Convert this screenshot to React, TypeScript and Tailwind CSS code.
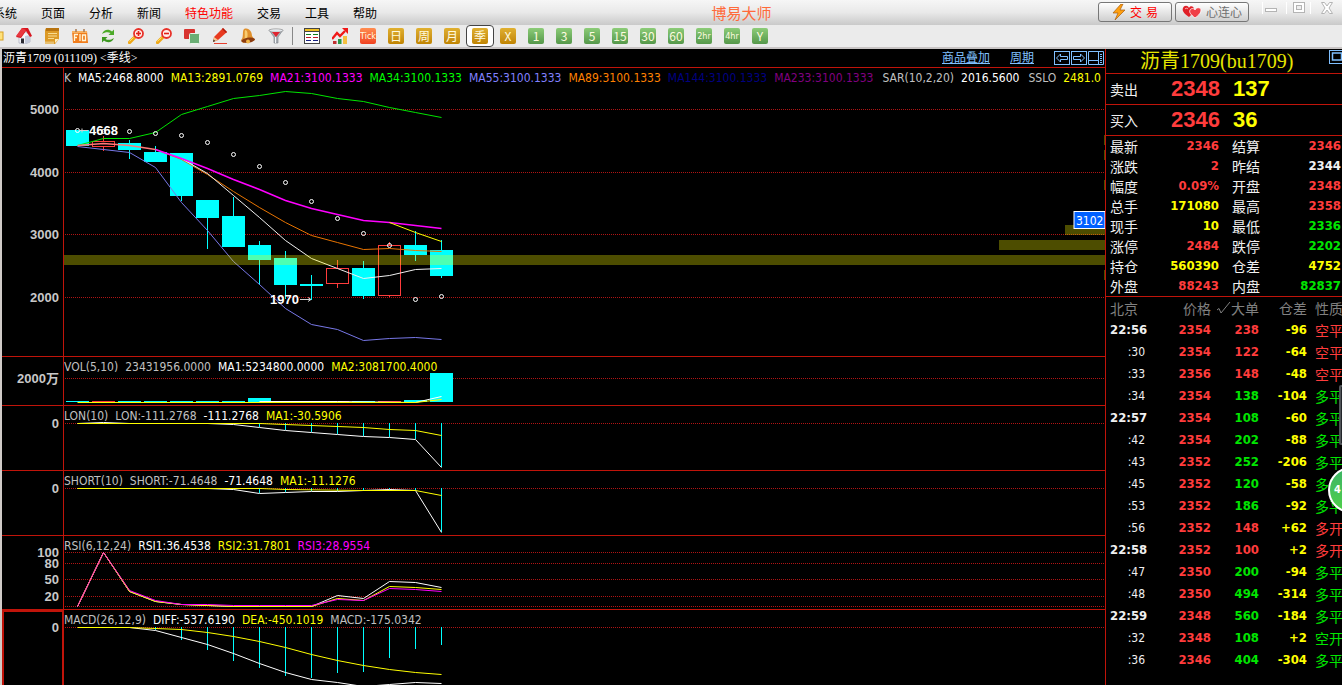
import React from "react";
import clsx from "clsx";

type Point = [index: number, y: number];

interface Candle {
  top: number;
  bottom: number;
  high?: number;
  low?: number;
  up?: boolean;
}

interface LegendItem {
  text: string;
  color: string;
}

interface AxisLabel {
  y: number;
  text: string;
}

const BAR_STEP = 26;
const barX = (index: number) => 13.5 + index * BAR_STEP;

const range = (ys: number[], start = 0): Point[] =>
  ys.map((y, i) => [start + i, y]);

const MENU = ["系统", "页面", "分析", "新闻", "特色功能", "交易", "工具", "帮助"];

const PERIODS = [
  { label: "Tick", tone: "tick" },
  { label: "日", tone: "gold" },
  { label: "周", tone: "gold" },
  { label: "月", tone: "gold" },
  { label: "季", tone: "gold", active: true },
  { label: "X", tone: "gold" },
  { label: "1", tone: "green" },
  { label: "3", tone: "green" },
  { label: "5", tone: "green" },
  { label: "15", tone: "green" },
  { label: "30", tone: "green" },
  { label: "60", tone: "green" },
  { label: "2hr", tone: "green" },
  { label: "4hr", tone: "green" },
  { label: "Y", tone: "green" },
];

const CANDLES: Candle[] = [
  { top: 62, bottom: 78 },
  { top: 73, bottom: 79, high: 68, low: 83, up: true },
  { top: 75, bottom: 82, high: 72, low: 91 },
  { top: 84, bottom: 94, high: 78 },
  { top: 85, bottom: 128, low: 133 },
  { top: 132, bottom: 150, low: 181 },
  { top: 148, bottom: 179, high: 129 },
  { top: 177, bottom: 192, high: 173, low: 217 },
  { top: 190, bottom: 217, high: 183, low: 231 },
  { top: 216, bottom: 218, high: 207, low: 232 },
  { top: 200, bottom: 216, high: 192, low: 220, up: true },
  { top: 200, bottom: 228, high: 193, low: 231 },
  { top: 177, bottom: 228, high: 174, low: 229, up: true },
  { top: 177, bottom: 187, high: 163, low: 193 },
  { top: 182, bottom: 208, high: 172, low: 210 },
];

const SAR = [63, 64, 64, 66, 68, 75, 87, 99, 115, 134, 151, 166, 178, 232, 229];

const UPPER = range([77, 70, 70, 64, 46, 38, 30, 27, 23, 25, 30, 33, 39, 44, 49]);
const LOWER = range([
  78, 81, 84, 99, 134, 162, 193, 216, 240, 256, 261, 272, 270, 269, 271,
]);
const MA5 = range([90, 105, 127, 149, 172, 190, 200, 210, 207, 201, 200], 4);
const MIDDLE = range(
  [81, 91, 106, 123, 139, 154, 167, 174, 181, 180, 182, 183],
  3
);
const MA21 = range(
  [81, 90, 100, 111, 121, 132, 140, 146, 152, 154, 157, 160],
  3
);

const LON_DIFF = [17, 16, 17, 17, 17, 17, 18, 21, 24, 26, 28, 30, 31, 33, 61];
const SHORT_DIFF = [
  17, 17, 17, 17, 17, 17, 18, 22, 21, 20, 20, 19, 18, 19, 61,
];
const MACD_BARS = [20, 30, 40, 51, 58, 66, 68, 63, 62, 48, 39, 35];

const QUOTES = [
  ["最新", "2346", "text-[#ff3c3c]", "结算", "2346", "text-[#ff3c3c]"],
  ["涨跌", "2", "text-[#ff3c3c]", "昨结", "2344", "text-[#f0f0f0]"],
  ["幅度", "0.09%", "text-[#ff3c3c]", "开盘", "2348", "text-[#ff3c3c]"],
  ["总手", "171080", "text-[#ffff00]", "最高", "2358", "text-[#ff3c3c]"],
  ["现手", "10", "text-[#ffff00]", "最低", "2336", "text-[#00e600]"],
  ["涨停", "2484", "text-[#ff3c3c]", "跌停", "2202", "text-[#00e600]"],
  ["持仓", "560390", "text-[#ffff00]", "仓差", "4752", "text-[#ffff00]"],
  ["外盘", "88243", "text-[#ff3c3c]", "内盘", "82837", "text-[#00e600]"],
];

const TICKS = [
  { time: "22:56", price: "2354", lots: "238", diff: "-96", kind: "空平", up: true },
  { time: ":30", price: "2354", lots: "122", diff: "-64", kind: "空平", up: true },
  { time: ":33", price: "2356", lots: "148", diff: "-48", kind: "空平", up: true },
  { time: ":34", price: "2354", lots: "138", diff: "-104", kind: "多平", up: false },
  { time: "22:57", price: "2354", lots: "108", diff: "-60", kind: "多平", up: false },
  { time: ":42", price: "2354", lots: "202", diff: "-88", kind: "多平", up: false },
  { time: ":43", price: "2352", lots: "252", diff: "-206", kind: "多平", up: false },
  { time: ":45", price: "2352", lots: "120", diff: "-58", kind: "多平", up: false },
  { time: ":53", price: "2352", lots: "186", diff: "-92", kind: "多平", up: false },
  { time: ":56", price: "2352", lots: "148", diff: "+62", kind: "多开", up: true },
  { time: "22:58", price: "2352", lots: "100", diff: "+2", kind: "多开", up: true },
  { time: ":47", price: "2350", lots: "200", diff: "-94", kind: "多平", up: false },
  { time: ":48", price: "2350", lots: "494", diff: "-314", kind: "多平", up: false },
  { time: "22:59", price: "2348", lots: "560", diff: "-184", kind: "多平", up: false },
  { time: ":32", price: "2348", lots: "108", diff: "+2", kind: "空开", up: false },
  { time: ":36", price: "2346", lots: "404", diff: "-304", kind: "多平", up: false },
];

/* ---------- Toolbar icons ---------- */

const HomeIcon = () => (
  <svg width="16" height="16" viewBox="0 0 16 16">
    <path d="M3 8v7l6 1 5-2V7L8 3z" fill="#f4f4f8" stroke="#9aa0b4" strokeWidth=".6" />
    <path d="M9 16l5-2V7L9 8z" fill="#c4cada" />
    <path d="M6 0h6l4 8-2 1-4-6-5 7-5-1z" fill="#d8141e" />
    <path d="M6 0L0 8l5 1 5-7z" fill="#e83840" />
    <path d="M5 10.500h3v5l-3-.6z" fill="#2c2c34" />
  </svg>
);

const NoteIcon = () => (
  <svg width="16" height="16" viewBox="0 0 16 16">
    <path d="M2 0h13v11l-4 5H1V2z" fill="#dc9a26" />
    <path d="M2 0h13v3H2z" fill="#b87410" />
    <path d="M4 5.500h9M4 8h9M4 10.500h6" stroke="#f8dc90" />
    <path d="M15 11l-4 4v-4z" fill="#fff0c0" />
    <path d="M1 13.500h9V16H1z" fill="#e8c070" />
  </svg>
);

const F10Icon = () => (
  <svg width="16" height="16" viewBox="0 0 16 16">
    <path d="M0 3h15l1 12H1z" fill="#f07c1c" />
    <path d="M0 3h15v2H0z" fill="#f8b060" />
    <path d="M4 1v3M12 1v3" stroke="#a87850" strokeWidth="1.500" />
    <path d="M2.500 13V6.500H6M2.500 9.500H5M8 6v7M10.500 7h3v5.500h-3z" fill="none" stroke="#fff6d8" strokeWidth="1.300" />
  </svg>
);

const RefreshIcon = () => (
  <svg width="16" height="16" viewBox="0 0 16 16">
    <path d="M2 6c2-5 7-5 10-2.500l2-2V7H8.500l2-2C8 3.500 5 4 2 6z" fill="#4caa28" />
    <path d="M14 10c-2 5-7 5-10 2.500l-2 2V9h5.500l-2 2c2.500 1.500 5.500 1 8.500-1z" fill="#3c9820" />
  </svg>
);

const MagnifierIcon = ({ plus }: { plus?: boolean }) => (
  <svg width="16" height="16" viewBox="0 0 16 16">
    <path d="M1.500 14.500l5-5" stroke="#f0a818" strokeWidth="3.200" strokeLinecap="round" />
    <path d="M1.500 13.500l4-4" stroke="#ffe060" strokeWidth="1" />
    <circle cx="10.500" cy="5.500" r="4.500" fill="#fff0ec" stroke="#e83028" strokeWidth="1.800" />
    <path d="M8 5.500h5" stroke="#e02018" strokeWidth="1.600" />
    {plus && <path d="M10.500 3v5" stroke="#e02018" strokeWidth="1.600" />}
  </svg>
);

const OverlayIcon = () => (
  <svg width="16" height="16" viewBox="0 0 16 16">
    <rect x="0" y="1" width="11" height="10" rx="1" fill="#d83430" />
    <rect x="5.500" y="5.500" width="10" height="10" rx="1" fill="#6aae74" stroke="#e8f4e8" />
  </svg>
);

const PencilIcon = () => (
  <svg width="16" height="16" viewBox="0 0 16 16">
    <path d="M1 14l1-5 9-9 4 4-9 8z" fill="#e83a20" />
    <path d="M10 1l4 4 1-1-4-4z" fill="#b01c10" />
    <path d="M1 14l1-5 4 3z" fill="#f4c890" />
    <path d="M1 14l.5-2.500L3.500 13z" fill="#403028" />
    <path d="M2 15.500h13" stroke="#e84030" />
  </svg>
);

const BellIcon = () => (
  <svg width="16" height="16" viewBox="0 0 16 16">
    <path d="M4 1c5-2 8 3 8 7l3 4-12 3-2-3c3-2 1-9 3-11z" fill="#e0902c" />
    <path d="M5 2c3 0 3 5 2 10l-4 2c3-4 1-8 2-12z" fill="#f8cc70" />
    <path d="M1 13c3-3 9-5 14-2 0 3-10 6-14 2z" fill="#8c3c10" />
    <circle cx="8" cy="13.500" r="2" fill="#f4b848" />
  </svg>
);

const FunnelIcon = () => (
  <svg width="16" height="16" viewBox="0 0 16 16">
    <path d="M1 2h14l-5 7v6H6V9z" fill="#a8aeb4" stroke="#787e84" strokeWidth=".6" />
    <ellipse cx="8" cy="2.500" rx="7" ry="1.700" fill="#e4e8ec" stroke="#888" strokeWidth=".6" />
    <path d="M4 4h8L8 9z" fill="#e02430" />
    <path d="M7.500 9v6" stroke="#f4f6f8" />
  </svg>
);

const TableIcon = () => (
  <svg width="16" height="16" viewBox="0 0 16 16">
    <rect x=".5" y=".5" width="15" height="15" fill="#fff" stroke="#444" />
    <path d="M1 2h14" stroke="#f0c020" strokeWidth="2" />
    <path d="M1 3.500h14" stroke="#444" />
    <path d="M2 6.500h5M9 6.500h5" stroke="#108018" />
    <path d="M2 9.500h5M9 9.500h5" stroke="#c01828" />
    <path d="M2 12.500h5M9 12.500h5" stroke="#182080" />
  </svg>
);

const TrendIcon = () => (
  <svg width="16" height="16" viewBox="0 0 16 16">
    <rect x="1" y="13" width="3.500" height="3" fill="#c03030" />
    <rect x="6" y="11" width="3.500" height="5" fill="#289848" />
    <rect x="11" y="8" width="4" height="8" fill="#f4c040" />
    <path d="M0 11l5-6 3 3 5-5" fill="none" stroke="#f01818" strokeWidth="2.400" />
    <path d="M10 0h6v6z" fill="#f01818" />
  </svg>
);

const FolderIcon = () => (
  <svg width="16" height="16" viewBox="0 0 16 16">
    <rect x="1" y="4" width="14" height="8" fill="#ffe27a" stroke="#d8a020" />
  </svg>
);

const TOOLS = [
  { label: "打开", icon: <FolderIcon /> },
  { label: "首页", icon: <HomeIcon /> },
  { label: "公告", icon: <NoteIcon /> },
  { label: "F10", icon: <F10Icon /> },
  { label: "刷新", icon: <RefreshIcon /> },
  { label: "放大", icon: <MagnifierIcon plus /> },
  { label: "缩小", icon: <MagnifierIcon /> },
  { label: "叠加", icon: <OverlayIcon /> },
  { label: "画线", icon: <PencilIcon /> },
  { label: "预警", icon: <BellIcon /> },
  { label: "筛选", icon: <FunnelIcon /> },
];

/* ---------- Header ---------- */

const TitleBar = () => (
  <header className="flex h-[25px] shrink-0 items-center bg-linear-to-b from-[#f6f6f6] via-[#e9e9e9] to-[#c9c9c9]">
    <nav className="-ml-[7px] flex gap-6 text-xs text-black">
      {MENU.map((item) => (
        <button
          key={item}
          type="button"
          className={clsx("whitespace-nowrap", item === "特色功能" && "text-[#ff0000]")}
        >
          {item}
        </button>
      ))}
    </nav>
    <h1 className="flex-1 pl-2 text-center text-[15px] leading-5 text-[#ff6a3a]">
      博易大师
    </h1>
    <div className="flex gap-[3px] self-start pt-[2px]">
      <button
        type="button"
        className="flex h-5 w-[74px] items-center justify-center gap-1 rounded-[3px] border border-[#777] bg-linear-to-b from-white to-[#cfcfcf] text-xs text-[#ff0000]"
      >
        <svg width="14" height="16" viewBox="0 0 14 16">
          <path d="M9 0L1 9h5l-3 7 10-10H8l3-6z" fill="#ffa010" stroke="#a85c10" strokeWidth=".7" />
        </svg>
        <span className="flex gap-1">
          <span>交</span>
          <span>易</span>
        </span>
      </button>
      <button
        type="button"
        className="flex h-5 w-[74px] items-center justify-center gap-1 rounded-[3px] border border-[#777] bg-linear-to-b from-white to-[#cfcfcf] text-xs text-[#707070]"
      >
        <svg width="20" height="14" viewBox="0 0 20 14">
          <path d="M7 12C1 8 0 5 1 3c1-3 5-3 6 0 1-3 5-2 5 1 0 3-2 5-5 8z" fill="#e02028" />
          <path d="M13 13C8 9 7 7 8 5c1-2 4-2 5 0 1-3 6-3 6 0s-2 5-6 8z" fill="#f04048" stroke="#fff" strokeWidth=".8" />
          <path d="M3 4c1-1 2-1 3 0" stroke="#ffc0c0" fill="none" />
        </svg>
        心连心
      </button>
    </div>
    <div className="ml-[13px] flex items-start self-start pt-[2px] text-[#b4b4b4]">
      <button type="button" aria-label="最小化" className="flex w-6 justify-center border-l border-white pr-2">
        <svg width="12" height="12" viewBox="0 0 12 12">
          <rect x=".5" y="6.500" width="11" height="3" fill="#fff" stroke="currentColor" />
        </svg>
      </button>
      <button type="button" aria-label="还原" className="flex w-6 justify-center border-l border-white">
        <svg width="12" height="12" viewBox="0 0 12 12">
          <rect x=".5" y=".5" width="11" height="10" fill="#fff" stroke="currentColor" />
          <rect x="3.500" y="3.500" width="5" height="4" fill="#eee" stroke="currentColor" />
        </svg>
      </button>
      <button type="button" aria-label="关闭" className="flex w-8 justify-center border-l border-white">
        <svg width="12" height="12" viewBox="0 0 12 12">
          <path d="M.5.5h3L6 4 8.500.5h3L8 6l3.500 5.500h-3L6 8l-2.500 3.500h-3L4 6z" fill="#fff" stroke="currentColor" />
        </svg>
      </button>
    </div>
  </header>
);

const PeriodButton = ({
  label,
  tone,
  active,
}: {
  label: string;
  tone: string;
  active?: boolean;
}) => (
  <button
    type="button"
    className={clsx(
      "flex h-[22px] w-7 items-center justify-center",
      active && "rounded-[4px] border border-[#444] bg-white"
    )}
  >
    <span
      className={clsx(
        "flex size-4 items-center justify-center rounded-[2px] leading-4 text-[#fffbe0]",
        tone === "tick" && "bg-linear-to-b from-[#ff8c50] to-[#f04020]",
        tone === "gold" && "bg-linear-to-b from-[#e0b030] to-[#c08400]",
        tone === "green" && "bg-linear-to-b from-[#8ccc78] to-[#55984a]",
        label.length > 2
          ? "font-['DejaVu_Sans_Condensed',sans-serif] text-[9px]"
          : "text-xs"
      )}
    >
      {label}
    </span>
  </button>
);

const Toolbar = () => (
  <div className="flex h-6 shrink-0 border-b-2 border-[#c8c4c4] bg-[#ebebeb]">
    <div className="-ml-[18px] flex">
      {TOOLS.map(({ label, icon }) => (
        <button
          key={label}
          type="button"
          aria-label={label}
          className="flex h-[22px] w-7 items-center justify-center"
        >
          {icon}
        </button>
      ))}
    </div>
    <div className="my-[2px] mr-[5px] ml-[2px] w-px bg-[#888]" />
    <button type="button" aria-label="报价" className="flex h-[22px] w-7 items-center justify-center">
      <TableIcon />
    </button>
    <button type="button" aria-label="走势" className="flex h-[22px] w-7 items-center justify-center">
      <TrendIcon />
    </button>
    {PERIODS.map((period) => (
      <PeriodButton key={period.label} {...period} />
    ))}
  </div>
);

/* ---------- Charts ---------- */

const Line = ({
  points,
  color,
  width = 1,
}: {
  points: Point[];
  color: string;
  width?: number;
}) => (
  <polyline
    points={points.map(([i, y]) => `${barX(i)},${y + 0.5}`).join(" ")}
    fill="none"
    stroke={color}
    strokeWidth={width}
  />
);

const GridLine = ({ y }: { y: number }) => (
  <line
    x1="1"
    x2="100%"
    y1={y + 0.5}
    y2={y + 0.5}
    stroke="#b01414"
    strokeDasharray="1 1"
  />
);

const Sticks = ({ base, points }: { base: number; points: Point[] }) => (
  <>
    {points.map(([i, y]) => (
      <line key={i} x1={barX(i)} x2={barX(i)} y1={base} y2={y} stroke="#00ffff" />
    ))}
  </>
);

interface PanelProps {
  className: string;
  legend: LegendItem[];
  labels: AxisLabel[];
  grid: number[];
  selected?: boolean;
  children: React.ReactNode;
}

const Panel: React.FC<PanelProps> = ({
  className,
  legend,
  labels,
  grid,
  selected,
  children,
}) => (
  <section className={clsx("flex border-[#c0140a]", className)}>
    <div
      className={clsx(
        "w-[62px] shrink-0 border-[#c0140a]",
        selected ? "border-2 border-b-0" : "border-r"
      )}
    >
      <svg className="block h-full w-full overflow-visible">
        {labels.map(({ y, text }) => (
          <text
            key={text}
            x={selected ? 55 : 57}
            y={selected ? y + 3 : y + 5}
            textAnchor="end"
            className="fill-[#c8c8c8] font-['Liberation_Sans','Noto_Sans_CJK_SC',sans-serif] text-[13px] font-bold"
          >
            {text}
          </text>
        ))}
      </svg>
    </div>
    <div className="relative min-w-0 flex-1 overflow-hidden">
      <div className="flex h-5 items-center gap-[7px] font-['DejaVu_Sans_Condensed','DejaVu_Sans',sans-serif] text-xs whitespace-nowrap">
        {legend.map(({ text, color }) => (
          <span key={text} className={color}>
            {text}
          </span>
        ))}
      </div>
      <svg className="absolute inset-0 h-full w-full">
        {grid.map((y) => (
          <GridLine key={y} y={y} />
        ))}
        {children}
      </svg>
    </div>
  </section>
);

const CandleShape = ({ candle, index }: { candle: Candle; index: number }) => {
  const x = barX(index);
  const color = candle.up ? "#ff3c3c" : "#00ffff";
  return (
    <g stroke={color}>
      {candle.high !== undefined && (
        <line x1={x} x2={x} y1={candle.high} y2={candle.top} />
      )}
      {candle.low !== undefined && (
        <line x1={x} x2={x} y1={candle.bottom} y2={candle.low} />
      )}
      <rect
        x={x - 11}
        y={candle.top + 0.5}
        width="22"
        height={candle.bottom - candle.top - 1}
        fill={candle.up ? "none" : color}
      />
    </g>
  );
};

const PricePanel = () => (
  <Panel
    className="h-[289px] border-b"
    grid={[41, 104, 166, 229]}
    labels={[
      { y: 41, text: "5000" },
      { y: 104, text: "4000" },
      { y: 166, text: "3000" },
      { y: 229, text: "2000" },
    ]}
    legend={[
      { text: "K", color: "text-[#c0c0c0]" },
      { text: "MA5:2468.8000", color: "text-white" },
      { text: "MA13:2891.0769", color: "text-[#ffff00]" },
      { text: "MA21:3100.1333", color: "text-[#ff00ff]" },
      { text: "MA34:3100.1333", color: "text-[#00ff00]" },
      { text: "MA55:3100.1333", color: "text-[#8080ff]" },
      { text: "MA89:3100.1333", color: "text-[#ff8000]" },
      { text: "MA144:3100.1333", color: "text-[#000080]" },
      { text: "MA233:3100.1333", color: "text-[#800080]" },
      { text: "SAR(10,2,20)", color: "text-[#c0c0c0] pl-[2px]" },
      { text: "2016.5600", color: "text-white" },
      { text: "SSLO", color: "text-[#c0c0c0] pl-[2px]" },
      { text: "2481.0", color: "text-[#ffff00]" },
    ]}
  >
    {CANDLES.map((candle, i) => (
      <CandleShape key={i} candle={candle} index={i} />
    ))}
    <Line points={LOWER} color="#7878e8" />
    <Line points={UPPER} color="#00e600" />
    <Line points={MIDDLE} color="#e87400" />
    <Line points={MA5} color="#f0f0f0" />
    <Line points={MA21} color="#ff00ff" width={1.5} />
    <Line points={range([77, 75, 77, 81])} color="#ff7878" width={1.5} />
    <Line points={range([154, 164, 173], 12)} color="#ffff00" />
    {/* Volume by price, grows from the right edge */}
    <rect x="0" y="187" width="100%" height="10" fill="#ffff00" opacity=".3" />
    <svg x="100%" overflow="visible" fill="#ffff00" fillOpacity=".3">
      <rect x="-40" y="157" width="40" height="10" />
      <rect x="-106" y="172" width="106" height="10" />
      <rect x="-1" y="67" width="1" height="10" />
      <rect x="-1" y="82" width="1" height="10" />
      <rect x="-1" y="112" width="1" height="10" />
      <rect x="-1" y="202" width="1" height="10" />
    </svg>
    {SAR.map((y, i) => (
      <circle key={i} cx={barX(i)} cy={y - 0.5} r="2" fill="none" stroke="#fff" />
    ))}
    <g className="fill-white font-['Liberation_Sans',sans-serif] text-[13px] font-bold">
      <text x="25" y="67">4668</text>
      <text x="206" y="236">1970</text>
    </g>
    <path d="M15 62.500h9M18 60.500v4M236 231.500h11M244 229.500l3 2-3 2" fill="none" stroke="#d0d0d0" />
    <svg x="100%" overflow="visible">
      <rect x="-31" y="143.500" width="31" height="17" fill="#0060ff" stroke="#fff" />
      <text
        x="-29"
        y="157"
        className="fill-white font-['DejaVu_Sans_Condensed','DejaVu_Sans',sans-serif] text-xs"
      >
        3102
      </text>
    </svg>
  </Panel>
);

const VolumePanel = () => (
  <Panel
    className="h-[49px] border-b"
    grid={[21]}
    labels={[{ y: 21, text: "2000万" }]}
    legend={[
      { text: "VOL(5,10)", color: "text-[#c0c0c0]" },
      { text: "23431956.0000", color: "text-[#c0c0c0]" },
      { text: "MA1:5234800.0000", color: "text-white" },
      { text: "MA2:3081700.4000", color: "text-[#ffff00]" },
    ]}
  >
    {[44, 44, 44, 44, 44, 44, 44, 41, 44, 44, 44, 44, 44, 43, 16].map((y, i) => (
      <rect
        key={i}
        x={barX(i) - 11.5}
        y={y}
        width="23"
        height={45 - y}
        fill={CANDLES[i].up ? "#ff3c3c" : "#00ffff"}
      />
    ))}
    <Line points={[[7, 44], [10, 44], [13, 45], [14, 39]]} color="#ffffff" />
    <Line points={[[0, 45], [13, 45], [14, 42]]} color="#ffff00" />
  </Panel>
);

const LonPanel = () => (
  <Panel
    className="h-[65px] border-b"
    grid={[17]}
    labels={[{ y: 17, text: "0" }]}
    legend={[
      { text: "LON(10)", color: "text-[#c0c0c0]" },
      { text: "LON:-111.2768", color: "text-[#c0c0c0]" },
      { text: "-111.2768", color: "text-white" },
      { text: "MA1:-30.5906", color: "text-[#ffff00]" },
    ]}
  >
    <Sticks base={17} points={range(LON_DIFF.slice(7), 7)} />
    <Line points={range(LON_DIFF)} color="#ffffff" />
    <Line
      points={[[0, 17], [7, 17], [8, 18], [9, 19], [10, 20], [11, 21], [12, 23], [13, 24], [14, 29]]}
      color="#ffff00"
    />
  </Panel>
);

const ShortPanel = () => (
  <Panel
    className="h-[65px] border-b"
    grid={[17]}
    labels={[{ y: 17, text: "0" }]}
    legend={[
      { text: "SHORT(10)", color: "text-[#c0c0c0]" },
      { text: "SHORT:-71.4648", color: "text-[#c0c0c0]" },
      { text: "-71.4648", color: "text-white" },
      { text: "MA1:-11.1276", color: "text-[#ffff00]" },
    ]}
  >
    <Sticks base={17} points={range(SHORT_DIFF.slice(7), 7)} />
    <Line points={range(SHORT_DIFF)} color="#ffffff" />
    <Line points={[[0, 17], [7, 17], [8, 18], [11, 19], [13, 19], [14, 24]]} color="#ffff00" />
  </Panel>
);

const RsiPanel = () => (
  <Panel
    className="h-[74px] border-b"
    grid={[16, 27, 43, 60, 70]}
    labels={[
      { y: 16, text: "100" },
      { y: 27, text: "80" },
      { y: 43, text: "50" },
      { y: 60, text: "20" },
    ]}
    legend={[
      { text: "RSI(6,12,24)", color: "text-[#c0c0c0]" },
      { text: "RSI1:36.4538", color: "text-white" },
      { text: "RSI2:31.7801", color: "text-[#ffff00]" },
      { text: "RSI3:28.9554", color: "text-[#ff00ff]" },
    ]}
  >
    <Line
      points={range([70, 16, 55, 65, 68, 69, 70, 70, 70, 70, 59, 62, 45, 46, 51])}
      color="#ffffff"
    />
    <Line
      points={range([70, 16, 55, 65, 68, 69, 70, 70, 70, 70, 62, 64, 50, 51, 53])}
      color="#ffff00"
    />
    <Line
      points={range([70, 16, 54, 64, 68, 68, 69, 69, 69, 69, 63, 64, 52, 53, 55])}
      color="#ff00ff"
    />
    <Line points={range([70, 16, 54])} color="#ff5a96" />
  </Panel>
);

const MacdPanel = () => (
  <Panel
    className="min-h-[75px] flex-1"
    selected
    grid={[17]}
    labels={[{ y: 17, text: "0" }]}
    legend={[
      { text: "MACD(26,12,9)", color: "text-[#c0c0c0]" },
      { text: "DIFF:-537.6190", color: "text-white" },
      { text: "DEA:-450.1019", color: "text-[#ffff00]" },
      { text: "MACD:-175.0342", color: "text-[#c0c0c0]" },
    ]}
  >
    <Sticks base={17} points={range(MACD_BARS, 3)} />
    <Line
      points={range([17, 20, 27, 34, 43, 53, 62, 69, 72, 76, 74, 72, 73], 2)}
      color="#ffffff"
    />
    <Line
      points={[[0, 17], ...range([17, 18, 19, 22, 26, 31, 37, 44, 50, 55, 59, 62, 64], 2)]}
      color="#ffff00"
    />
  </Panel>
);

const ChartHeader = () => (
  <div className="flex h-[19px] items-center border-b border-[#c0140a] font-['Liberation_Serif','Noto_Sans_CJK_SC',serif] text-xs leading-4 text-white">
    <h2 className="flex-1 pl-px">沥青1709 (011109) &lt;季线&gt;</h2>
    <a href="#overlay" className="mr-5 text-[#80c0ff] underline">
      商品叠加
    </a>
    <a href="#period" className="mr-5 text-[#80c0ff] underline">
      周期
    </a>
    <div className="mr-px flex gap-px text-[#80c0ff]">
      <button type="button" aria-label="向前">
        <svg width="16" height="14" viewBox="0 0 16 14" fill="none" stroke="currentColor">
          <rect x=".5" y=".5" width="15" height="13" />
          <path d="M2.500 7L6.500 3v2.500h7v3h-7V11z" />
        </svg>
      </button>
      <button type="button" aria-label="向后">
        <svg width="16" height="14" viewBox="0 0 16 14" fill="none" stroke="currentColor">
          <rect x=".5" y=".5" width="15" height="13" />
          <path d="M13.500 7l-4-4v2.500h-7v3h7V11z" />
        </svg>
      </button>
      <button type="button" aria-label="布局">
        <svg width="16" height="14" viewBox="0 0 16 14" fill="none" stroke="currentColor">
          <path d="M.5.500h15v13H.5zM.5 9.500h10M10.500.5v13" />
          <path d="M12 3.500h2M12 5.500h2M12 7.500h2M12 9.500h2M12 11.500h2" />
        </svg>
      </button>
    </div>
  </div>
);

/* ---------- Quote panel ---------- */

const BookRow = ({ label, price, lots }: { label: string; price: string; lots: string }) => (
  <div className="flex h-[31px] items-center border-b border-[#c0140a] pl-1">
    <span className="w-[61px] text-sm text-[#f0f0f0]">{label}</span>
    <span className="w-[62px] font-['Liberation_Sans',sans-serif] text-[22px] leading-7 font-bold text-[#ff3c3c]">
      {price}
    </span>
    <span className="font-['Liberation_Sans',sans-serif] text-[22px] leading-7 font-bold text-[#ffff00]">
      {lots}
    </span>
  </div>
);

const QuotePanel = () => (
  <aside className="relative w-[237px] shrink-0 overflow-hidden border-l border-[#c0140a]">
    <div className="flex h-[25px] items-center justify-end border-b border-[#c0140a]">
      <h2 className="flex-1 pl-[34px] font-['Liberation_Serif','Noto_Sans_CJK_SC',serif] text-xl leading-6 whitespace-nowrap text-[#e6e600]">
        沥青1709(bu1709)
      </h2>
      <button type="button" aria-label="窗口" className="-mr-[3px] mb-2 text-[#80c0ff]">
        <svg width="16" height="14" viewBox="0 0 16 14" fill="none" stroke="currentColor">
          <rect x=".5" y=".5" width="15" height="13" />
          <rect x="3.500" y="3" width="9" height="7" strokeWidth="1.500" />
        </svg>
      </button>
    </div>
    <BookRow label="卖出" price="2348" lots="137" />
    <BookRow label="买入" price="2346" lots="36" />
    <dl className="border-b border-[#c0140a]">
      {QUOTES.map(([label, value, tone, label2, value2, tone2]) => (
        <div
          key={label}
          className="grid h-5 grid-cols-[28px_81px_41px_81px] items-center pl-1 text-sm leading-5"
        >
          <dt className="text-[#f0f0f0]">{label}</dt>
          <dd className={clsx("text-right font-['DejaVu_Sans_Condensed',sans-serif] text-[13px] font-bold", tone)}>
            {value}
          </dd>
          <dt className="text-right text-[#f0f0f0]">{label2}</dt>
          <dd className={clsx("text-right font-['DejaVu_Sans_Condensed',sans-serif] text-[13px] font-bold", tone2)}>
            {value2}
          </dd>
        </div>
      ))}
    </dl>
    <table className="w-full table-fixed text-sm whitespace-nowrap">
      <thead>
        <tr className="h-[22px] text-[#808080] [&>th]:p-0 [&>th]:font-normal">
          <th className="w-[54px]">
            <span className="block pl-1 text-left">北京</span>
          </th>
          <th className="w-[51px] text-right">价格</th>
          <th className="w-[48px] text-right">
            <span className="flex items-center justify-end">
              <svg width="14" height="12" viewBox="0 0 14 12" fill="none" stroke="currentColor">
                <path d="M0 8l2-1.500L4 11 13 0" />
              </svg>
              大单
            </span>
          </th>
          <th className="w-[48px] text-right">仓差</th>
          <th>
            <span className="block pl-2 text-left">性质</span>
          </th>
        </tr>
      </thead>
      <tbody className="font-['DejaVu_Sans_Condensed',sans-serif] text-[13px] font-bold">
        {TICKS.map((tick) => {
          const minute = tick.time.length > 3;
          const tone = tick.up ? "text-[#ff3c3c]" : "text-[#00e600]";
          return (
            <tr key={tick.time} className="h-[22px] leading-5 text-right [&>td]:p-0">
              <td className="text-[#f0f0f0]">
                <span
                  className={clsx(
                    "block",
                    minute ? "pl-1 text-left" : "pr-[15px] text-xs font-normal leading-5"
                  )}
                >
                  {tick.time}
                </span>
              </td>
              <td className="text-[#ff3c3c]">{tick.price}</td>
              <td className={tone}>{tick.lots}</td>
              <td className="text-[#ffff00]">{tick.diff}</td>
              <td className={tone}>
                <span className="block pl-2 text-left font-['Noto_Sans_CJK_SC',sans-serif] text-sm leading-5 font-normal">
                  {tick.kind}
                </span>
              </td>
            </tr>
          );
        })}
      </tbody>
    </table>
    {/* Floating helper widgets over the right edge */}
    <div className="absolute top-[336px] -right-1 h-[60px] w-[7px] rounded-[2px] border-2 border-[#505458] bg-[#22262a]" />
    <button
      type="button"
      className="absolute top-[418px] -right-8 flex size-[46px] items-center rounded-full border-2 border-white bg-linear-to-b from-[#3cb464] to-[#50d048] pl-1 font-['DejaVu_Sans_Condensed',sans-serif] text-[11px] font-bold text-white"
    >
      4
    </button>
  </aside>
);

const App = () => (
  <div className="flex h-screen flex-col overflow-hidden bg-black font-['Noto_Sans_CJK_SC',sans-serif]">
    <TitleBar />
    <Toolbar />
    <main className="flex min-h-0 flex-1 border-l-2 border-[#d0cbc8]">
      <div className="flex min-w-0 flex-1 flex-col">
        <ChartHeader />
        <PricePanel />
        <VolumePanel />
        <LonPanel />
        <ShortPanel />
        <RsiPanel />
        <MacdPanel />
      </div>
      <QuotePanel />
    </main>
  </div>
);

export default App;
